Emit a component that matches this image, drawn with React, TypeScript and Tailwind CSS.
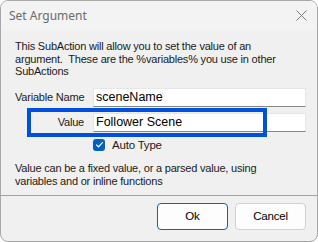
import React from "react";

// Dialog labels
const INTRO_TEXT = "This SubAction will allow you to set the value of an argument.  These are the %variables% you use in other SubActions";
const HELP_TEXT = "Value can be a fixed value, or a parsed value, using variables and or inline functions";

function TextRow({ label, value }: { label: string; value: string }) {
    return (
        <div className="flex items-center h-[19px]">
            <div className="w-[69px] text-right shrink-0 whitespace-nowrap">{label}</div>
            <div className="ml-[9px] w-[213px] shrink-0 h-[19px] bg-white border border-[#e6e6e6] border-b-[#868686] flex items-center px-[2px] text-[12.5px] tracking-normal text-black">
                {value}
            </div>
        </div>
    );
}

export default function App() {
    return (
        <div className="w-[318px] h-[242px] bg-white" style={{ fontFamily: '"Liberation Sans", Arial, sans-serif' }}>
            <div className="w-full h-full rounded-[8px] border border-[#a8a8a8] bg-[#f0f0f0] flex flex-col overflow-hidden relative">
                {/* Title bar */}
                <div className="h-[29px] shrink-0 bg-[#f3f3f3] flex items-center justify-between pl-[8px] pr-[9px]">
                    <span className="text-[12px] text-[#6b6b6b]" style={{ fontFamily: '"Noto Sans", "Open Sans", sans-serif' }}>Set Argument</span>
                    <svg width="11" height="11" viewBox="0 0 11 11" className="mr-[1px]">
                        <path d="M0.5 0.5 L10.5 10.5 M10.5 0.5 L0.5 10.5" stroke="#7a7a7a" strokeWidth="1" />
                    </svg>
                </div>

                {/* Body */}
                <div className="flex-1 pl-[14px] pr-[10px] pt-[10px] text-[11px] leading-[12.5px] tracking-[-0.2px] text-[#1a1a1a]">
                    <p className="w-[282px] whitespace-pre-wrap">{INTRO_TEXT}</p>

                    <div className="mt-[10px] flex flex-col gap-[6px]">
                        <TextRow label="Variable Name" value="sceneName" />
                        <TextRow label="Value" value="Follower Scene" />
                    </div>

                    <div className="mt-[7px] ml-[78px] flex items-center gap-[7px]">
                        <div className="w-[12px] h-[12px] rounded-[3px] bg-[#0060c0] flex items-center justify-center">
                            <svg width="9" height="9" viewBox="0 0 9 9">
                                <path d="M1.2 4.6 L3.5 6.8 L7.8 2.2" stroke="white" strokeWidth="1.2" fill="none" />
                            </svg>
                        </div>
                        <span className="text-[11.5px]">Auto Type</span>
                    </div>

                    <p className="mt-[11px] w-[270px]">{HELP_TEXT}</p>
                </div>

                {/* Footer */}
                <div className="h-[46px] shrink-0 border-t border-[#a0a0a0] flex justify-end items-start gap-[7px] pt-[7px] pr-[11px] text-[11.5px] tracking-[-0.2px]">
                    <button type="button" className="w-[71px] h-[27px] rounded-[4px] border border-[#0067c0] bg-[#fdfdfd] text-black">
                        Ok
                    </button>
                    <button type="button" className="w-[71px] h-[27px] rounded-[4px] border border-[#d0d0d0] bg-[#fdfdfd] text-black">
                        Cancel
                    </button>
                </div>

                {/* Highlight annotation */}
                <div className="absolute left-[26px] top-[107px] w-[240px] h-[29px] border-[4px] border-[#0050e0] pointer-events-none" />
            </div>
        </div>
    );
}
